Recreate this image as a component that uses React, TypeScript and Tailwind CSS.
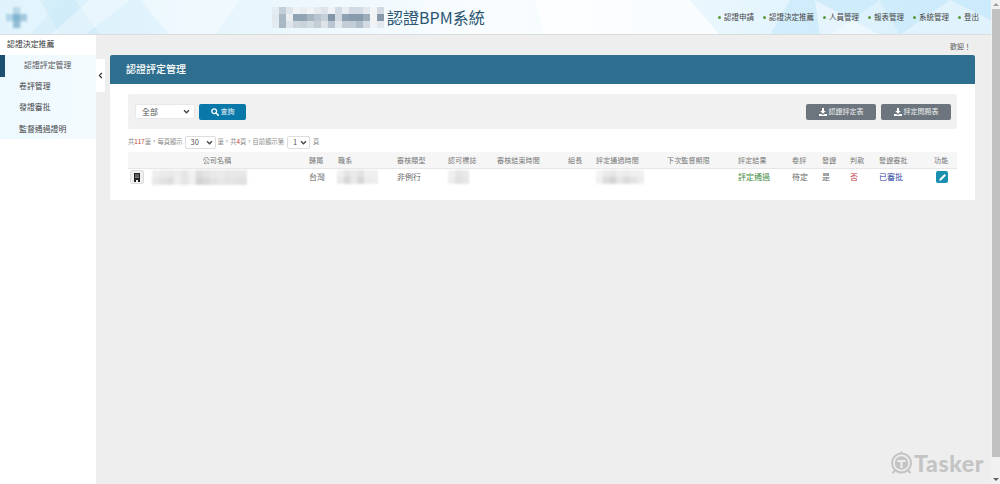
import React from "react";
import { ChevronLeft, Pencil } from "lucide-react";

const FONT = "font-['Noto_Sans_CJK_TC','Noto_Sans',sans-serif]";

function Mosaic({ rows, cell, className }: { rows: string[][]; cell: number; className?: string }) {
  const h = rows.length * cell;
  const w = rows[0].length * cell;
  return (
    <svg width={w} height={h} viewBox={`0 0 ${w} ${h}`} className={className}>
      {rows.map((r, y) =>
        r.map((c, x) =>
          c ? <rect key={`${x}-${y}`} x={x * cell} y={y * cell} width={cell + 0.3} height={cell + 0.3} fill={c} /> : null
        )
      )}
    </svg>
  );
}

const titleRows = [
  ["#e4ebf1", "#c2cfd9", "#dde4ea", "#f0f3f6", "#e8edf1", "#f0f3f6", "#e6ebf0", "#dee4ea", "#f0f3f6", "#d2dbe3", "#e8edf1", "#d2dbe3", "#d2dbe3", "#e3e8ed", "#f2f4f6", "#d2dae2"],
  ["#e0e7ed", "#a9b8c5", "#eceff2", "#8fa3b3", "#8fa3b3", "#a7b6c3", "#b8c4cf", "#c5d0d9", "#8296a8", "#d0d8e0", "#8fa2b3", "#879bad", "#879bad", "#9cadbb", "#f2f4f6", "#8799aa"],
  ["#e4ebf0", "#a8b8c5", "#dfe6eb", "#cdd6de", "#c9d3db", "#d2dbe2", "#c2cdd6", "#dde3e9", "#bac7d2", "#e2e7ec", "#c2cdd7", "#c2cdd7", "#b0bfcb", "#d2dbe2", "#f0f3f5", "#e4e9ee"],
];
const crossRows = [
  ["", "#b9d8e8", ""],
  ["#b0d5e8", "#82b5d0", "#a4c8dc"],
  ["", "#93bfd6", ""],
];
const companyRows = [
  ["#eeeeee", "#ebebeb", "#e9e9e9", "#ececec", "#e5e5e5", "#f1f1f1", "#dedede", "#e4e4e4", "#e9e9e9", "#eaeaea", "#e7e7e7", "#e7e7e7", "#e7e7e7"],
  ["#e8e8e8", "#e2e2e2", "#dedede", "#eeeeee", "#e5e5e5", "#f0f0f0", "#d4d4d4", "#dadada", "#e2e2e2", "#e7e7e7", "#e4e4e4", "#e2e2e2", "#e0e0e0"],
];
const deptRows = [
  ["#efefef", "#e4e4e4", "#eaeaea", "#e2e2e2", "#efefef", "#efefef"],
  ["#e9e9e9", "#d8d8d8", "#e9e9e9", "#d6d6d6", "#ebebeb", "#ededed"],
];
const markRows = [
  ["#f0f0f0", "#e5e5e5", "#e8e8e8"],
  ["#ededed", "#e1e1e1", "#e6e6e6"],
];
const dateRows = [
  ["#f3f3f3", "#ebebeb", "#e6e6e6", "#eeeeee", "#ebebeb", "#efefef", "#f0f0f0"],
  ["#f0f0f0", "#dcdcdc", "#d4d4d4", "#e6e6e6", "#dcdcdc", "#e3e3e3", "#ececec"],
];

function NavItem({ label }: { label: string }) {
  return (
    <span className="flex items-center gap-[3px]">
      <span className="w-[3px] h-[3px] rounded-full bg-[#5a9a3c]" />
      <span>{label}</span>
    </span>
  );
}

function Header() {
  return (
    <header className="relative h-[35px] shrink-0 overflow-hidden border-b border-[#dcdcdc] bg-gradient-to-r from-[#d6effb] via-[#fafdff] to-[#d3eefb]">
      <svg className="absolute inset-0" width="991" height="35" viewBox="0 0 991 35">
        <polygon points="0,0 60,0 30,35 0,35" fill="#ffffff" opacity="0.25" />
        <polygon points="40,0 75,0 100,35 60,35" fill="#c8e8f8" opacity="0.5" />
        <polygon points="90,0 130,0 85,35 50,35" fill="#ffffff" opacity="0.35" />
        <polygon points="140,0 240,0 215,35 170,35" fill="#ffffff" opacity="0.4" />
        <polygon points="535,0 690,0 720,35 545,35" fill="#ffffff" opacity="0.7" />
        <polygon points="790,0 880,0 830,35 770,35" fill="#bfe6fa" opacity="0.5" />
        <polygon points="880,0 991,0 991,35 900,35" fill="#c4e8fb" opacity="0.55" />
        <polygon points="820,35 880,35 815,0" fill="#ffffff" opacity="0.45" />
        <polygon points="900,35 950,0 991,20 991,35" fill="#ffffff" opacity="0.4" />
      </svg>
      <div className="relative flex items-center h-full">
        <Mosaic rows={crossRows} cell={7} className="ml-[6px] blur-[0.8px]" />
        <Mosaic rows={titleRows} cell={7} className="ml-[245px] blur-[0.6px]" />
        <span className="ml-[3px] text-[16px] leading-none text-[#2b5570]">認證BPM系統</span>
        <nav className="ml-auto mr-[12px] flex gap-[9px] text-[7.5px] text-[#444]">
          {["認證申請", "認證決定推薦", "人員管理", "報表管理", "系統管理", "登出"].map((l) => (
            <NavItem key={l} label={l} />
          ))}
        </nav>
      </div>
    </header>
  );
}

function Sidebar() {
  return (
    <aside className="w-[96px] shrink-0 bg-white text-[7.9px] text-[#333]">
      <div className="h-[20px] pl-[7px] pb-[2px] flex items-center">認證決定推薦</div>
      <div className="bg-gradient-to-r from-[#edf9ff] to-[#f4fbfe] h-[84px]">
        <div className="relative h-[21px] pl-[24px] pb-[2px] flex items-center text-[#555]">
          <span className="absolute left-0 top-0 w-[5px] h-[22px] bg-[#1d4f6e]" />
          認證評定管理
        </div>
        <div className="h-[21px] pl-[19px] pb-[2px] flex items-center text-[#444]">卷評管理</div>
        <div className="h-[21px] pl-[19px] pb-[2px] flex items-center text-[#444]">發證審批</div>
        <div className="h-[21px] pl-[19px] flex items-center text-[#444]">監督通過證明</div>
      </div>
    </aside>
  );
}

const columns = [
  { label: "公司名稱", w: 178, center: true },
  { label: "歸屬", w: 29 },
  { label: "職系", w: 59 },
  { label: "審核類型", w: 51 },
  { label: "認可標誌", w: 49 },
  { label: "審核結束時間", w: 71 },
  { label: "組長", w: 28 },
  { label: "評定通過時間", w: 71 },
  { label: "下次監督期限", w: 71 },
  { label: "評定結果", w: 54 },
  { label: "卷評", w: 30 },
  { label: "發證", w: 28 },
  { label: "判款", w: 29 },
  { label: "發證審批", w: 55 },
  { label: "功能", w: 26 },
];

function DataTable() {
  return (
    <table className="w-[829px] table-fixed border-collapse">
      <colgroup>
        {columns.map((c) => (
          <col key={c.label} span={1} width={c.w} />
        ))}
      </colgroup>
      <thead>
        <tr className="h-[16px] bg-[#f6f6f6] border-b border-[#e6e6e6] text-[7px] text-[#777] tracking-[0.15px]">
          {columns.map((c) => (
            <th key={c.label} className={`font-normal pl-[3px] p-0 whitespace-nowrap ${c.center ? "text-center pr-[3px]" : "text-left"}`}>
              {c.label}
            </th>
          ))}
        </tr>
      </thead>
      <tbody>
        <tr className="h-[18px] text-[8px] text-[#666]">
          <td className="p-0">
            <div className="flex items-center">
              <span className="ml-[2px] w-[14px] h-[14px] rounded-[2px] bg-[#efefef] border border-[#ddd] flex items-center justify-center">
                <svg width="8" height="9" viewBox="0 0 8 9">
                  <path d="M1 0h6v9H5V7H3v2H1z M2.4 1.4v1.2h1.2V1.4z M4.4 1.4v1.2h1.2V1.4z M2.4 3.6v1.2h1.2V3.6z M4.4 3.6v1.2h1.2V3.6z" fill="#222" fillRule="evenodd" />
                </svg>
              </span>
              <Mosaic rows={companyRows} cell={7.3} className="ml-[8px] blur-[1.2px]" />
            </div>
          </td>
          <td className="p-0 pl-[3px]">台灣</td>
          <td className="p-0 pl-[2px]"><Mosaic rows={deptRows} cell={6.8} className="blur-[1.2px]" /></td>
          <td className="p-0 pl-[3px]">非例行</td>
          <td className="p-0 pl-[3px]"><Mosaic rows={markRows} cell={7} className="blur-[1.2px]" /></td>
          <td className="p-0" />
          <td className="p-0" />
          <td className="p-0 pl-[3px]"><Mosaic rows={dateRows} cell={6.8} className="blur-[1.2px]" /></td>
          <td className="p-0" />
          <td className="p-0 pl-[3px] text-[#3f8a3f]">評定通過</td>
          <td className="p-0 pl-[3px]">待定</td>
          <td className="p-0 pl-[3px]">是</td>
          <td className="p-0 pl-[3px] text-[#c2414b]">否</td>
          <td className="p-0 pl-[3px] text-[#2a3f9f]">已審批</td>
          <td className="p-0">
            <span className="ml-[5px] w-[12px] h-[12px] rounded-[2px] bg-[#1b8fb0] flex items-center justify-center">
              <Pencil size={7} color="white" fill="white" strokeWidth={2} />
            </span>
          </td>
        </tr>
      </tbody>
    </table>
  );
}

function SolidDownload() {
  return (
    <svg width="8" height="8" viewBox="0 0 8 8">
      <path d="M3 0h2v3h1.8L4 5.8 1.2 3H3z M0 6h2.4L4 7l1.6-1H8v2H0z" fill="white" />
    </svg>
  );
}

function SolidSearch() {
  return (
    <svg width="8" height="8" viewBox="0 0 8 8">
      <circle cx="3.2" cy="3.2" r="2.4" fill="none" stroke="white" strokeWidth="1.3" />
      <path d="M5 5 7.3 7.3" stroke="white" strokeWidth="1.6" strokeLinecap="round" />
    </svg>
  );
}

function Chevron() {
  return (
    <svg width="7" height="7" viewBox="0 0 7 7">
      <path d="M1 2.2 3.5 4.8 6 2.2" fill="none" stroke="#444" strokeWidth="1.3" />
    </svg>
  );
}

function GrayButton({ label }: { label: string }) {
  return (
    <button className="w-[70px] h-[16px] rounded-[2px] bg-[#6c757d] text-[#eef0f2] text-[7px] flex items-center justify-center gap-[2px]">
      <SolidDownload />
      {label}
    </button>
  );
}

function Panel() {
  return (
    <section className="w-[865px] rounded-t-[2px] bg-white">
      <h1 className="h-[29px] pl-[16px] pb-[2px] flex items-center bg-[#2e6e8e] text-white text-[10px] font-medium rounded-t-[2px]">
        認證評定管理
      </h1>
      <div className="px-[18px] pt-[10px] pb-[14px]">
        <div className="w-[829px] h-[35px] rounded-[2px] bg-[#f1f1f1] pl-[7px] pr-[6px] flex items-center">
          <div className="w-[60px] h-[15px] rounded-[2px] bg-white border border-[#e8e8e8] flex items-center pl-[6px] text-[8px] text-[#555] relative">
            全部
            <span className="absolute right-[4px] top-[3px]">
              <Chevron />
            </span>
          </div>
          <button className="ml-[4px] w-[47px] h-[16px] rounded-[2px] bg-[#0a78a8] text-[#eef6fa] text-[7px] flex items-center justify-center gap-[2px]">
            <SolidSearch />
            查詢
          </button>
          <div className="ml-auto flex gap-[5px]">
            <GrayButton label="認證評定表" />
            <GrayButton label="評定問題表" />
          </div>
        </div>
        <div className="h-[20px] mt-[3px] flex items-center text-[6.3px] text-[#888]">
          <span>共<span className="text-[#c0392b]">117</span>筆，每頁顯示</span>
          <span className="mx-[2px] w-[31px] h-[13px] border border-[#ddd] rounded-[2px] flex items-center justify-between pl-[5px] pr-[2px] text-[7.5px] text-[#555]">
            30
            <Chevron />
          </span>
          <span>筆，共<span className="text-[#c0392b]">4</span>頁，目前顯示第</span>
          <span className="ml-[3px] mr-[3px] w-[23px] h-[13px] border border-[#ddd] rounded-[2px] flex items-center justify-between pl-[5px] pr-[2px] text-[7.5px] text-[#555]">
            1
            <Chevron />
          </span>
          <span>頁</span>
        </div>
        <DataTable />
      </div>
    </section>
  );
}

function Watermark() {
  return (
    <div className="absolute right-[7px] bottom-[9px] flex items-center gap-[1px]">
      <svg width="23" height="24" viewBox="0 0 23 24">
        <circle cx="11.5" cy="12" r="9.5" fill="none" stroke="#c4c4c4" strokeWidth="2" />
        <circle cx="11.5" cy="12" r="6.8" fill="#c4c4c4" />
        <path d="M7.5 9h8v2h-3v6h-2v-6h-3z" fill="#eeeeee" />
        <path d="M11.5 0l2 3h-4z M2 21l3-3 1 2-3 3z M21 21l-3-3-1 2 3 3z" fill="#c4c4c4" />
      </svg>
      <span className="font-['Lato',sans-serif] font-black text-[23px] leading-none text-[#c4c4c4] tracking-[0.6px]">Tasker</span>
    </div>
  );
}

function Scrollbar() {
  return (
    <div className="w-[9px] shrink-0 bg-[#f1f1f1] flex flex-col items-center">
      <div className="h-[9px] flex items-center justify-center">
        <div className="w-0 h-0 border-x-[3px] border-x-transparent border-b-[3px] border-b-[#a0a0a0]" />
      </div>
      <div className="w-[8px] h-[448px] bg-[#c1c1c1]" />
      <div className="flex-1 flex items-end pb-[3px]">
        <div className="w-0 h-0 border-x-[3px] border-x-transparent border-t-[3px] border-t-[#606060]" />
      </div>
    </div>
  );
}

export default function App() {
  return (
    <div className={`${FONT} w-[1000px] h-[484px] overflow-hidden flex bg-[#eeeeee]`}>
      <div className="flex-1 flex flex-col min-w-0">
        <Header />
        <div className="relative flex flex-1 min-h-0">
          <Sidebar />
          <button className="absolute left-[96px] top-[24px] w-[9px] h-[33px] bg-white flex items-center justify-center">
            <ChevronLeft size={9} color="#333" strokeWidth={3} className="shrink-0" />
          </button>
          <main className="flex-1 pl-[14px]">
            <div className="h-[20px] w-[861px] pt-[2px] flex items-center justify-end text-[7px] text-[#555]">歡迎！</div>
            <Panel />
          </main>
          <Watermark />
        </div>
      </div>
      <Scrollbar />
    </div>
  );
}
